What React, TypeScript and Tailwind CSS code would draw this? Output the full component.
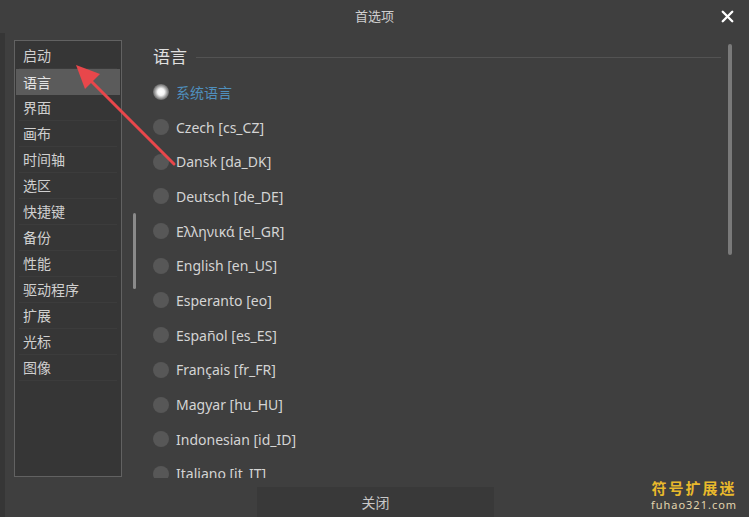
import { X } from "lucide-react";

const categories = ["启动", "语言", "界面", "画布", "时间轴", "选区", "快捷键", "备份", "性能", "驱动程序", "扩展", "光标", "图像"];

const languages = [
  "系统语言",
  "Czech [cs_CZ]",
  "Dansk [da_DK]",
  "Deutsch [de_DE]",
  "Ελληνικά [el_GR]",
  "English [en_US]",
  "Esperanto [eo]",
  "Español [es_ES]",
  "Français [fr_FR]",
  "Magyar [hu_HU]",
  "Indonesian [id_ID]",
  "Italiano [it_IT]",
];

function Radio({ checked }: { checked: boolean }) {
  if (checked) {
    return (
      <span className="w-4 h-4 rounded-full bg-[radial-gradient(circle,#ffffff_0%,#f4f4f4_30%,#9a9a9a_55%,#4a4a4a_80%)] shrink-0" />
    );
  }
  return <span className="w-4 h-4 rounded-full bg-[#575757] shrink-0" />;
}

export default function App() {
  return (
    <div
      className="relative w-[749px] h-[517px] bg-[#3f3f3f] flex flex-col overflow-hidden text-[#d2d2d2]"
      style={{ fontFamily: '"Noto Sans", "Noto Sans CJK SC", sans-serif' }}
    >
      {/* title bar */}
      <div className="relative h-[33px] flex items-center justify-center shrink-0">
        <span className="text-[13px] text-[#cfcfcf]">首选项</span>
        <X className="absolute right-[12px] top-[7px] text-white" size={19} strokeWidth={3} />
      </div>

      <div className="flex h-[445px] pt-[7px] shrink-0">
        {/* left strip */}
        <div className="w-[5px] bg-[#363636] -mt-[7px] h-[484px] shrink-0" />

        {/* category list */}
        <div className="ml-[9px] w-[108px] h-[437px] border border-[#626262] bg-[#363636] pt-[2px] px-[1px] shrink-0">
          {categories.map((c, i) => (
            <div
              key={c}
              className={
                i === 1
                  ? "h-[26px] flex items-center pl-[7px] bg-[#5b5b5b] text-[14px] text-[#e4e4e4]"
                  : "h-[26px] flex items-center text-[14px] text-[#d0d0d0] border-b border-[#3c3c3c] mx-[3px] pl-[4px]"
              }
            >
              {c}
            </div>
          ))}
        </div>

        {/* left scrollbar */}
        <div className="w-[31px] flex justify-center pt-[173px] pr-[6px] shrink-0">
          <div className="w-[3px] h-[76px] bg-[#8a8a8a] rounded-sm" />
        </div>

        {/* language panel */}
        <div className="flex-1 flex h-[438px] overflow-hidden">
          <div className="flex-1 flex flex-col">
            <div className="flex items-center h-[33px] shrink-0">
              <span className="text-[17px] text-[#e0e0e0]">语言</span>
              <div className="flex-1 h-px bg-[#535353] ml-[9px] mr-[7px] mt-[1px]" />
            </div>
            <div className="pt-[2px]">
              {languages.map((l, i) => (
                <div key={l} className="h-[34.7px] flex items-center gap-[7px]">
                  <Radio checked={i === 0} />
                  <span className={i === 0 ? "text-[14px] text-[#4f8fbd]" : "text-[14px] text-[#d4d4d4]"}>{l}</span>
                </div>
              ))}
            </div>
          </div>
          <div className="w-[21px] pt-[4px] shrink-0">
            <div className="w-[4px] h-[211px] bg-[#7a7a7a] rounded-sm" />
          </div>
        </div>
      </div>

      {/* bottom */}
      <div className="flex-1 flex pl-[257px] pt-[9px]">
        <button className="w-[237px] h-[31px] bg-[#393939] text-[14px] text-[#c8c8c8] flex items-center justify-center">
          关闭
        </button>
      </div>

      {/* watermark */}
      <div className="absolute left-[650px] top-[479px] w-[88px] flex flex-col items-center whitespace-nowrap">
        <div className="h-[19px] flex items-center text-[15px] leading-[19px] text-[#e9b92c] tracking-[2px] font-bold">符号扩展迷</div>
        <div className="h-[13px] flex items-center text-[11px] leading-[13px] text-[#e2d5ae] tracking-[1px]">fuhao321.com</div>
      </div>

      {/* red annotation arrow */}
      <svg className="absolute left-0 top-0 pointer-events-none" width="749" height="517">
        <line x1="174" y1="164" x2="86" y2="76" stroke="#e8474b" strokeWidth="3" strokeLinecap="round" />
        <polygon points="76,65 100,74 85,89" fill="#e8474b" />
      </svg>
    </div>
  );
}
